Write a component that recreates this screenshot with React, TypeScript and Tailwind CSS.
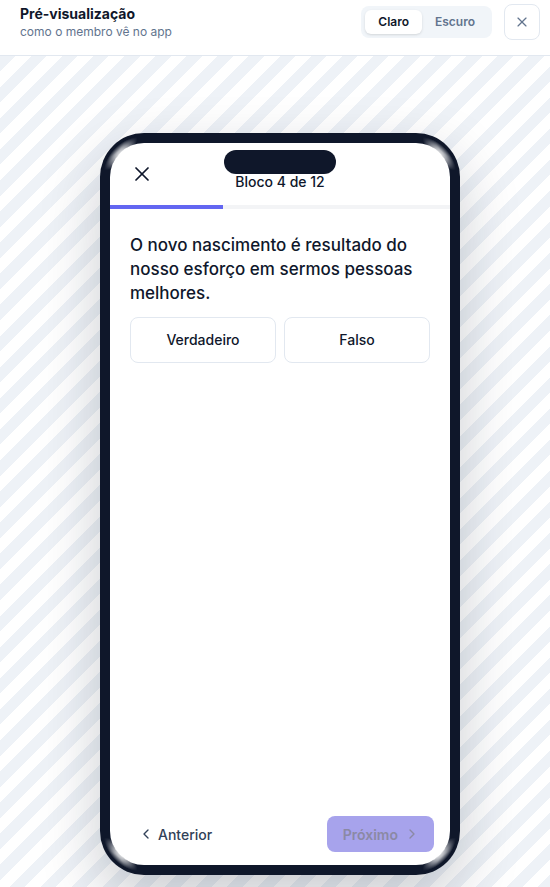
import React from "react";
import { X, ChevronLeft, ChevronRight } from "lucide-react";

const PreviewHeader: React.FC = () => {
  return (
    <header className="flex h-[56px] items-start justify-between border-b border-slate-200 bg-white pt-1 pl-5 pr-2.5">
      <div className="flex flex-col">
        <span className="text-[14px] font-bold leading-5 text-slate-900">
          Pré-visualização
        </span>
        <span className="text-[12px] leading-4 text-slate-500">
          como o membro vê no app
        </span>
      </div>
      <div className="flex h-9 items-center gap-3">
        <div className="flex rounded-lg bg-slate-100 p-1">
          <button className="h-6 rounded-md bg-white px-[13px] text-[12px] font-semibold text-slate-900 shadow-sm">
            Claro
          </button>
          <button className="h-6 rounded-md px-[13px] text-[12px] font-semibold text-slate-500">
            Escuro
          </button>
        </div>
        <button className="flex h-9 w-9 items-center justify-center rounded-lg border border-slate-200 text-slate-500">
          <X size={16} strokeWidth={1.75} />
        </button>
      </div>
    </header>
  );
};

const PhoneScreen: React.FC = () => {
  return (
    <div className="relative flex h-[722px] w-[340px] flex-col overflow-hidden rounded-[34px] bg-white">
      {/* notch */}
      <div className="absolute left-1/2 top-[7px] h-6 w-[112px] -translate-x-1/2 rounded-full bg-[#0f172a]" />

      <div className="flex h-[62px] items-start px-5">
        <button className="mt-[19px] flex h-6 w-6 items-center justify-center text-slate-900">
          <X size={24} strokeWidth={1.75} />
        </button>
        <div className="mt-[29px] flex-1 text-center text-[14px] font-medium leading-5 text-slate-900">
          Bloco 4 de 12
        </div>
        <div className="w-6" />
      </div>

      <div className="h-1 w-full bg-gray-100">
        <div className="h-1 bg-[#6366f1]" style={{ width: `${(4 / 12) * 100}%` }} />
      </div>

      <div className="flex flex-1 flex-col px-5 pt-6">
        <p className="text-[17px] font-medium leading-6 text-slate-900">
          O novo nascimento é resultado do nosso esforço em sermos pessoas
          melhores.
        </p>
        <div className="mt-3 grid grid-cols-2 gap-2">
          <button className="rounded-lg border border-slate-200 py-3 text-[14px] font-medium leading-5 text-slate-900">
            Verdadeiro
          </button>
          <button className="rounded-lg border border-slate-200 py-3 text-[14px] font-medium leading-5 text-slate-900">
            Falso
          </button>
        </div>
      </div>

      <div className="flex items-center justify-between px-4 pb-[13px]">
        <button className="flex h-9 items-center gap-1 px-3 text-[14px] font-medium text-slate-700">
          <ChevronLeft size={16} strokeWidth={2} />
          Anterior
        </button>
        <button
          disabled
          className="flex h-9 items-center gap-1.5 rounded-lg bg-[#a7a3ec] pl-4 pr-[14px] text-[14px] font-semibold text-[#8b89a4]"
        >
          Próximo
          <ChevronRight size={16} strokeWidth={2} />
        </button>
      </div>
    </div>
  );
};

const App: React.FC = () => {
  return (
    <div className="flex min-h-[887px] flex-col bg-white font-['Inter',sans-serif]">
      <PreviewHeader />
      <main className="flex flex-1 justify-center bg-[repeating-linear-gradient(135deg,#eef2f7_0_11px,#ffffff_11px_22px)] pl-[10px] pt-[77px]">
        <div className="relative h-[742px] w-[360px] overflow-hidden rounded-[44px] bg-[#0f172a] p-[10px] shadow-[0_24px_60px_rgba(15,23,42,0.22)]">
          <PhoneScreen />
          {/* soft glass fade in the frame corners */}
          <div className="pointer-events-none absolute left-0 top-0 h-[44px] w-[44px] bg-[radial-gradient(circle_at_44px_44px,rgba(255,255,255,0)_33px,#ffffff_34px,rgba(255,255,255,0)_41px)] [mask-image:radial-gradient(circle_at_0px_0px,#000_26px,transparent_38px)]" />
          <div className="pointer-events-none absolute right-0 top-0 h-[44px] w-[44px] bg-[radial-gradient(circle_at_0px_44px,rgba(255,255,255,0)_33px,#ffffff_34px,rgba(255,255,255,0)_41px)] [mask-image:radial-gradient(circle_at_44px_0px,#000_26px,transparent_38px)]" />
          <div className="pointer-events-none absolute bottom-0 left-0 h-[44px] w-[44px] bg-[radial-gradient(circle_at_44px_0px,rgba(255,255,255,0)_33px,#ffffff_34px,rgba(255,255,255,0)_41px)] [mask-image:radial-gradient(circle_at_0px_44px,#000_26px,transparent_38px)]" />
          <div className="pointer-events-none absolute bottom-0 right-0 h-[44px] w-[44px] bg-[radial-gradient(circle_at_0px_0px,rgba(255,255,255,0)_33px,#ffffff_34px,rgba(255,255,255,0)_41px)] [mask-image:radial-gradient(circle_at_44px_44px,#000_26px,transparent_38px)]" />
        </div>
      </main>
    </div>
  );
};

export default App;
